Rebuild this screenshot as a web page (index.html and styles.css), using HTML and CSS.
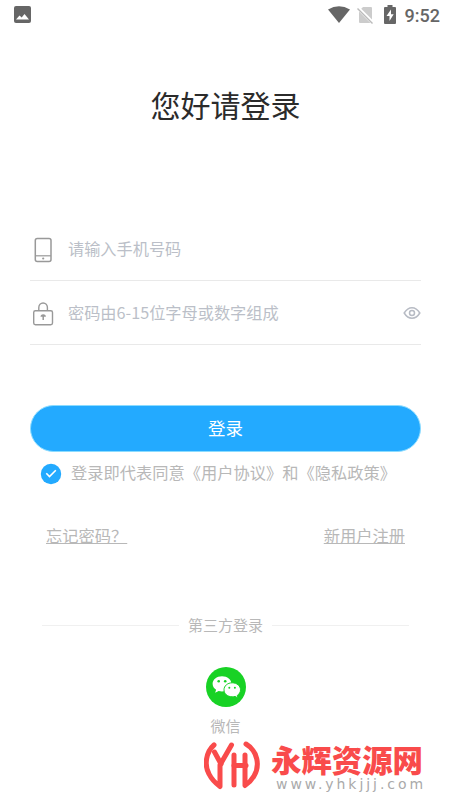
FILE: index.html
```html
<!DOCTYPE html>
<html lang="zh-CN">
<head>
<meta charset="UTF-8">
<title>登录</title>
<link rel="stylesheet" href="styles.css">
</head>
<body>
<header class="status">
  <svg class="status-pic" width="17" height="17" viewBox="0 0 17 17"><rect width="17" height="17" rx="2" fill="#666"/><path d="M2 13.500 5.500 9.500l2.200 2L10.500 8l4.500 5.500z" fill="#fff"/></svg>
  <svg class="status-wifi" width="22" height="17" viewBox="0 0 22 17"><path d="M0 3.500Q11-3.200 22 3.500L11 17z" fill="#666"/></svg>
  <svg class="status-sim" width="17" height="18" viewBox="0 0 17 18"><path d="M6 1h8q1 0 1 1v14q0 1-1 1H3q-1 0-1-1V5z" fill="#ccc"/><path d="M1 2l15 15" stroke="#fff" stroke-width="3.500"/><path d="M.5 2.500l15 15" stroke="#bbb" stroke-width="1.400"/></svg>
  <svg class="status-battery" width="12" height="19" viewBox="0 0 12 19"><path d="M3.500 0h5v2H11q1 0 1 1v15q0 1-1 1H1q-1 0-1-1V3q0-1 1-1h2.500z" fill="#666"/><path d="M7 4.500 2.500 11H5.500v5L9.700 9.300H7z" fill="#fff"/></svg>
  <span class="clock">9:52</span>
</header>
<main>
  <h1>您好请登录</h1>
  <form class="form">
    <div class="field">
      <svg class="field-icon" width="26" height="28" viewBox="0 0 26 28" fill="none" stroke="#999" stroke-width="1.500"><rect x="5.300" y="2.500" width="15.700" height="23" rx="2"/><path d="M5.500 19.800H21" stroke-width="1.200"/><circle cx="13.200" cy="22.500" r="1.100" fill="#999" stroke="none"/></svg>
      <span class="hint">请输入手机号码</span>
    </div>
    <div class="field">
      <svg class="field-icon" width="26" height="28" viewBox="0 0 26 28" fill="none" stroke="#999" stroke-width="1.400"><rect x="3.700" y="10.700" width="18.800" height="14" rx="1.700"/><path d="M8.800 10.500V7.500a4.300 4.500 0 0 1 8.600 0v3"/><path d="M13.200 15v5" stroke-width="1.500"/><path d="M10.500 16.800a2.700 2.600 0 0 1 5.400 0z" fill="#999" stroke="none"/></svg>
      <span class="hint">密码由6-15位字母或数字组成</span>
      <svg class="eye" width="18" height="14" viewBox="0 0 18 14" fill="none" stroke="#b7bbc4" stroke-width="1.500"><path d="M1.200 7C5.500 0 12.500 0 16.800 7 12.500 14 5.500 14 1.200 7z"/><circle cx="9" cy="7" r="2.500"/></svg>
    </div>
    <div class="submit">登录</div>
    <div class="agree">
      <svg width="22" height="22" viewBox="0 0 22 22"><circle cx="11" cy="11" r="10.200" fill="#23aaff"/><path d="M6.300 10.300l3.200 3.200 6.300-6.200" fill="none" stroke="#fff" stroke-width="1.600"/></svg>
      <span>登录即代表同意《用户协议》和《隐私政策》</span>
    </div>
  </form>
  <nav class="links"><span class="link">忘记密码？</span><span class="link">新用户注册</span></nav>
  <div class="third"><i class="rule"></i><span>第三方登录</span><i class="rule"></i></div>
  <div class="wechat">
    <svg width="42" height="42" viewBox="0 0 42 42"><circle cx="21" cy="21" r="20" fill="#18d225"/><path d="M17 10.200c-5.400 0-9.400 3.400-9.400 7.600 0 2.500 1.300 4.500 3.500 6l-1 3 3.500-1.800c1.100.3 2.200.5 3.400.5 5.400 0 9.400-3.400 9.400-7.700s-4-7.600-9.400-7.600z" fill="#fff"/><path d="M27.200 16.800c-4.700 0-8.200 3.100-8.200 7s3.500 7 8.200 7c1 0 2-.1 2.900-.4l3 1.700-.8-2.700c2-1.300 3.200-3.300 3.200-5.600 0-3.900-3.600-7-8.300-7z" fill="#fff" stroke="#18d225" stroke-width="1"/><g fill="#18d225"><circle cx="13.700" cy="15.200" r="1.300"/><circle cx="20.200" cy="15.200" r="1.300"/><circle cx="24.300" cy="21.700" r="1"/><circle cx="29.900" cy="21.700" r="1"/></g></svg>
    <span>微信</span>
  </div>
</main>
<aside class="mark">
  <svg width="56" height="52" viewBox="0 0 56 52" fill="none" stroke="#f94b4b" stroke-width="5" stroke-linejoin="round" stroke-linecap="round"><path d="M10 6C2 13 0 26 5 35q3.500 7 11 12.500V26L27.500 6"/><path d="M17 25 10.500 13"/><path d="M30 16V46"/><path d="M30 26.500H42"/><path d="M42 5C54 12 56 27 50 37q-3.500 6-9 9.500V16"/></svg>
  <div class="mark-text"><strong>永辉资源网</strong><span>www.yhkjjj.com</span></div>
</aside>
</body>
</html>
```
FILE: styles.css
```css
* { box-sizing: border-box; }
body {
  margin: 0;
  width: 450px;
  height: 800px;
  overflow: hidden;
  position: relative;
  background: #fff;
  color: #b8b8b8;
  font-family: "Noto Sans CJK SC", sans-serif;
  font-weight: 400;
}
svg { display: block; flex: none; }
.status {
  display: flex;
  align-items: center;
  height: 30px;
  padding: 0 10px 0 14px;
}
.status-wifi { margin-left: auto; }
.status-sim { margin-left: 7px; }
.status-battery { margin: 0 9px 0 10px; }
.status svg { margin-bottom: 1px; }
.clock {
  font: 500 18px/30px Roboto, sans-serif;
  color: #666;
  padding-top: 1px;
}
h1 {
  margin: 52px 0 0 1px;
  font-size: 30px;
  line-height: 44px;
  font-weight: 400;
  text-align: center;
  color: #2b2b2b;
}
.form { margin: 91px 29px 0 30px; }
.field {
  display: flex;
  align-items: center;
  height: 64px;
  border-bottom: 1px solid #e9e9e9;
  font-size: 16.2px;
  color: #bbbfc8;
}
.field-icon { margin: 3px 12px 0 0; }
.hint { padding-bottom: 2px; }
.eye { margin-left: auto; }
.submit {
  height: 47px;
  margin-top: 60px;
  border: 1px solid #8bdcff;
  border-radius: 24px;
  background: #23aaff;
  color: #fff;
  font-size: 17.5px;
  line-height: 43px;
  text-align: center;
}
.agree {
  display: flex;
  align-items: center;
  gap: 9px;
  height: 42px;
  padding-left: 10px;
  font-size: 16.25px;
  white-space: nowrap;
}
.agree svg { margin-top: 1px; }
.agree span { padding-bottom: 2px; }
.links {
  display: flex;
  justify-content: space-between;
  margin: 29px 45px 0 46px;
  font-size: 16.25px;
  line-height: 24px;
}
.link { text-decoration: underline; text-decoration-thickness: 1px; text-underline-offset: 1px; }
.third {
  display: flex;
  align-items: center;
  gap: 9px;
  height: 22px;
  margin: 67px 41px 0 42px;
  font-size: 15px;
}
.third span { padding-bottom: 1px; }
.rule { flex: 1; height: 1px; background: #f0f0f0; }
.wechat {
  display: flex;
  flex-direction: column;
  align-items: center;
  margin: 30px 0 0 1px;
  font-size: 15px;
  line-height: 22px;
}
.wechat span { margin-top: 7px; }
.mark {
  position: absolute;
  left: 204px;
  top: 739px;
  display: flex;
}
.mark-text { margin-left: 11px; }
.mark strong {
  display: block;
  font-size: 30.4px;
  line-height: 36px;
  font-weight: 900;
  color: #f94b4b;
  white-space: nowrap;
  margin-top: 2px;
}
.mark-text span {
  display: block;
  width: fit-content;
  margin: 0 0 0 5px;
  font: 14px/14px "DejaVu Sans", sans-serif;
  letter-spacing: 2.95px;
  color: #aaa;
}
```
